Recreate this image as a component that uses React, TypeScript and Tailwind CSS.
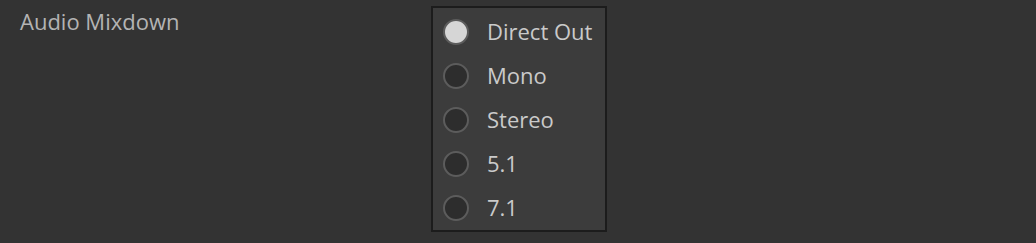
const OPTIONS = ['Direct Out', 'Mono', 'Stereo', '5.1', '7.1'];

function Radio({ checked }: { checked: boolean }) {
  return checked ? (
    <span className="h-[26px] w-[26px] shrink-0 rounded-full border-2 border-[#5c5c5c] bg-[#d6d6d6]" />
  ) : (
    <span className="h-[26px] w-[26px] shrink-0 rounded-full border-2 border-[#5c5c5c] bg-[#2d2d2d]" />
  );
}

export default function App() {
  const selected = 'Direct Out';
  return (
    <div
      className="flex h-[243px] w-[1036px] bg-[#333333] text-[22px]"
      style={{ fontFamily: '"Open Sans", sans-serif' }}
    >
      <div className="w-[431px] pl-5 pt-[6px] leading-[30px] text-[#b4b4b4]">Audio Mixdown</div>
      <div className="mt-[6px] flex h-[226px] w-[176px] flex-col border-2 border-[#1c1c1c] bg-[#3c3c3c] pt-[2px]">
        {OPTIONS.map((opt) => (
          <div key={opt} className="flex h-[44px] shrink-0 items-center pl-[10px]">
            <Radio checked={opt === selected} />
            <span className="ml-[18px] pb-[2px] leading-[30px] text-[#cacaca]">{opt}</span>
          </div>
        ))}
      </div>
    </div>
  );
}
